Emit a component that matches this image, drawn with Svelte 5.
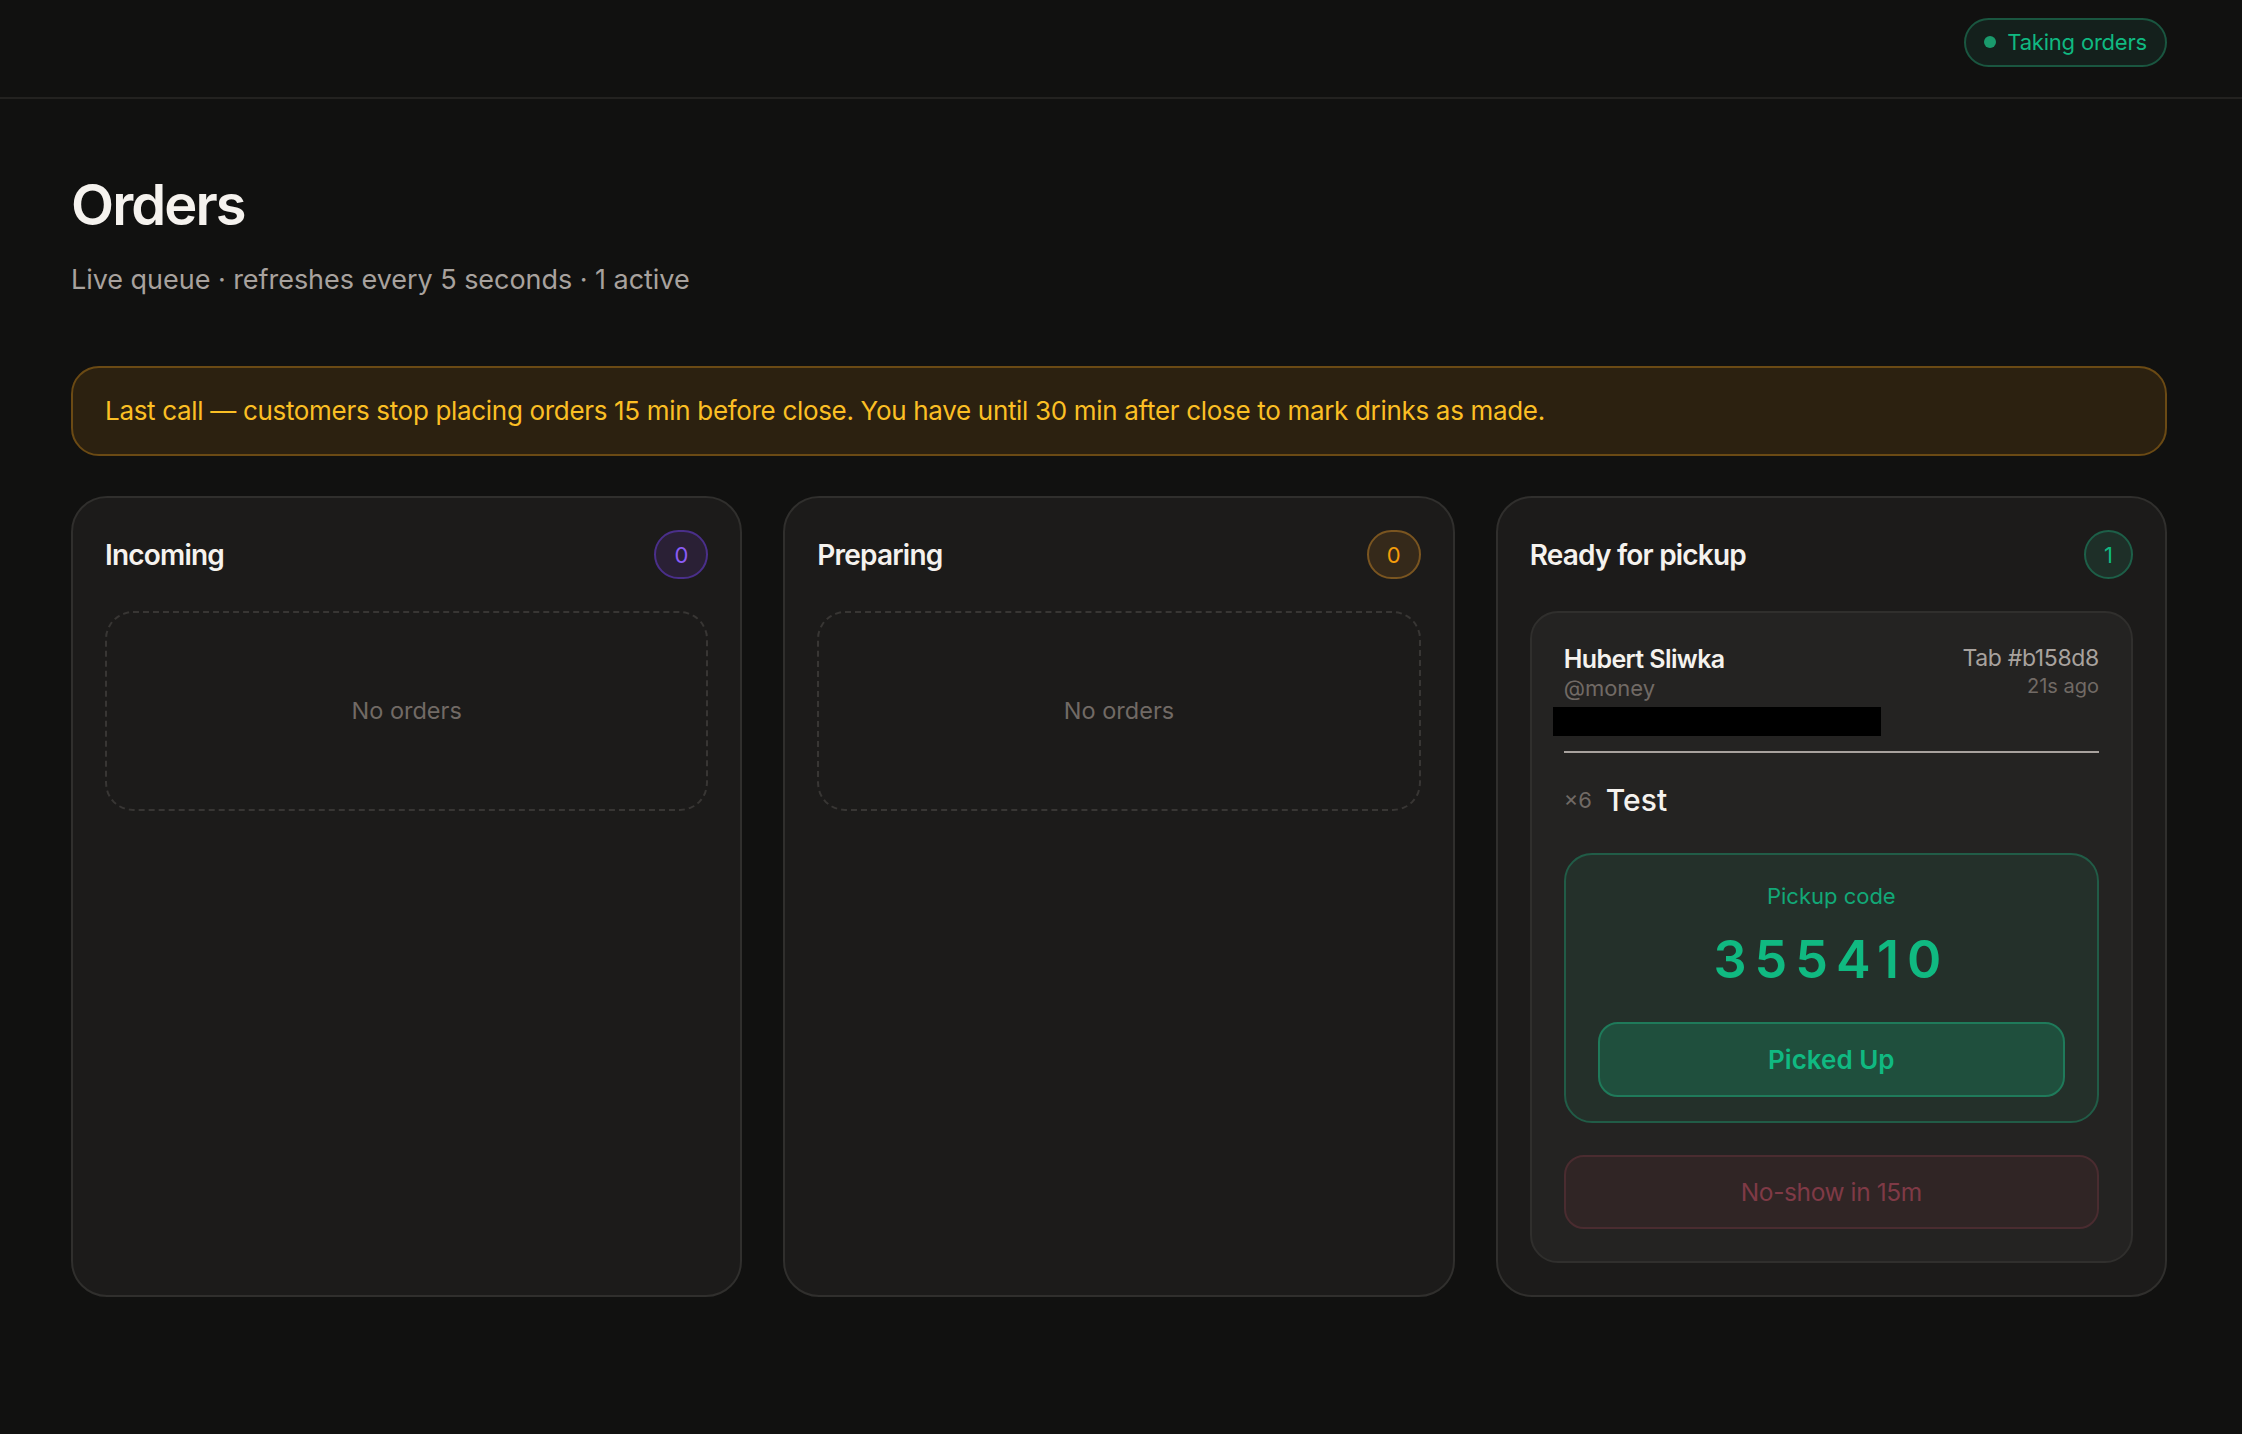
<script lang="ts">
    let columns = [
        { title: "Incoming", tone: "purple", count: 0 },
        { title: "Preparing", tone: "amber", count: 0 },
        { title: "Ready for pickup", tone: "green", count: 1 },
    ]
</script>

<header>
    <div class="status"><span class="dot"></span>Taking orders</div>
</header>

<main>
    <h1>Orders</h1>
    <p class="sub">Live queue · refreshes every 5 seconds · 1 active</p>

    <div class="banner">Last call — customers stop placing orders 15 min before close. You have until 30 min after close to mark drinks as made.</div>

    <div class="board">
        {#each columns as col}
            <section class="col">
                <div class="col-head">
                    <h2>{col.title}</h2>
                    <span class="count {col.tone}">{col.count}</span>
                </div>
                {#if col.count === 0}
                    <div class="empty">No orders</div>
                {:else}
                    <article class="order">
                        <div class="order-head">
                            <div class="who">
                                <div class="name">Hubert Sliwka</div>
                                <div class="handle">@money</div>
                            </div>
                            <div class="meta">
                                <div class="tab">Tab #b158d8</div>
                                <div class="ago">21s ago</div>
                            </div>
                        </div>
                        <div class="redacted"></div>
                        <div class="item"><span class="qty">×6</span><span class="item-name">Test</span></div>
                        <div class="pickup">
                            <div class="pickup-label">Pickup code</div>
                            <div class="code">355410</div>
                            <button type="button" class="picked">Picked Up</button>
                        </div>
                        <button type="button" class="noshow" disabled>No-show in 15m</button>
                    </article>
                {/if}
            </section>
        {/each}
    </div>
</main>

<style>
    :global(body) {
        background: #111110;
        color: #f5f2ee;
        font-family: Inter, "Noto Sans", sans-serif;
        min-height: 1434px;
    }

    header {
        height: 99px;
        box-sizing: border-box;
        border-bottom: 2px solid #232220;
        padding: 18px 75px 0 0;
        display: flex;
        justify-content: flex-end;
        align-items: flex-start;
    }

    .status {
        display: flex;
        align-items: center;
        gap: 11px;
        height: 49px;
        box-sizing: border-box;
        padding: 0 18px 1px;
        border: 2px solid #1a5640;
        border-radius: 25px;
        background: #14201c;
        color: #10b981;
        font-size: 22px;
        letter-spacing: -0.2px;
    }

    .dot {
        width: 12px;
        height: 12px;
        border-radius: 50%;
        background: #1a9a6c;
    }

    main {
        padding: 74px 75px 0 71px;
    }

    h1 {
        margin: 0;
        font-size: 56px;
        line-height: 64px;
        font-weight: 600;
        letter-spacing: -1.9px;
    }

    .sub {
        margin: 23px 0 0;
        font-size: 27px;
        line-height: 40px;
        color: #a8a29e;
        letter-spacing: -0.04px;
    }

    .banner {
        margin-top: 66px;
        height: 90px;
        box-sizing: border-box;
        padding: 0 32px 2px;
        display: flex;
        align-items: center;
        background: #2c2110;
        border: 2px solid #6b4a14;
        border-radius: 28px;
        color: #fbbf24;
        font-size: 26px;
        letter-spacing: -0.32px;
    }

    .board {
        margin-top: 40px;
        display: grid;
        grid-template-columns: repeat(3, 1fr);
        gap: 41px;
    }

    .col {
        background: #1c1b1a;
        border: 2px solid #302f2d;
        border-radius: 36px;
        padding: 32px;
    }

    .col-head {
        display: flex;
        justify-content: space-between;
        align-items: center;
        height: 49px;
        margin-bottom: 32px;
    }

    h2 {
        margin: 0;
        font-size: 28px;
        font-weight: 600;
        letter-spacing: -0.8px;
    }

    .count {
        height: 49px;
        box-sizing: border-box;
        border: 2px solid;
        border-radius: 25px;
        padding: 0 18px;
        display: flex;
        align-items: center;
        justify-content: center;
        font-size: 22px;
    }

    .purple {
        background: #2a2035;
        border-color: #4a2f8a;
        color: #8b5cf6;
    }

    .amber {
        background: #35291a;
        border-color: #7a5520;
        color: #f59e0b;
    }

    .green {
        background: #1e2f28;
        border-color: #1d5f48;
        color: #10b981;
    }

    .empty {
        height: 200px;
        box-sizing: border-box;
        border: 2px dashed #383634;
        border-radius: 28px;
        padding-bottom: 2px;
        display: flex;
        align-items: center;
        justify-content: center;
        color: #716a65;
        font-size: 23.5px;
    }

    .order {
        background: #242322;
        border: 2px solid #302f2d;
        border-radius: 28px;
        padding: 32px;
    }

    .order-head {
        display: flex;
        justify-content: space-between;
        margin-top: -2px;
    }

    .name {
        font-size: 25px;
        font-weight: 600;
        line-height: 32px;
        letter-spacing: -0.6px;
    }

    .handle {
        font-size: 22px;
        line-height: 26px;
        color: #716a65;
    }

    .meta {
        text-align: right;
    }

    .tab {
        font-size: 23px;
        line-height: 30px;
        color: #a8a29e;
        letter-spacing: -0.35px;
    }

    .ago {
        font-size: 20px;
        line-height: 26px;
        color: #716a65;
    }

    .redacted {
        height: 29px;
        width: 328px;
        margin: 6px 0 0 -11px;
        background: #000;
    }

    .item {
        border-top: 2px solid #a8a29e;
        margin-top: 15px;
        padding-bottom: 7px;
        display: flex;
        align-items: center;
        gap: 14px;
        height: 102px;
        box-sizing: border-box;
    }

    .qty {
        font-size: 22px;
        color: #716a65;
    }

    .item-name {
        font-size: 30px;
        font-weight: 500;
    }

    .pickup {
        background: #24302a;
        border: 2px solid #215c47;
        border-radius: 28px;
        height: 270px;
        box-sizing: border-box;
        padding: 26px 32px 0;
        text-align: center;
    }

    .pickup-label {
        color: #12a877;
        font-size: 22px;
        line-height: 30px;
    }

    .code {
        color: #10b981;
        font-size: 52px;
        line-height: 60px;
        font-weight: 600;
        letter-spacing: 8px;
        margin-top: 19px;
    }

    .picked {
        display: block;
        width: 100%;
        height: 75px;
        margin-top: 32px;
        background: #1f4f3d;
        border: 2px solid #1f7a5a;
        border-radius: 20px;
        color: #10b981;
        font: inherit;
        font-size: 26px;
        font-weight: 600;
    }

    .noshow {
        display: block;
        width: 100%;
        height: 74px;
        margin-top: 32px;
        background: #302525;
        border: 2px solid #4a2c30;
        border-radius: 20px;
        color: #7f3a46;
        font: inherit;
        font-size: 24.5px;
        letter-spacing: -0.4px;
    }
</style>
